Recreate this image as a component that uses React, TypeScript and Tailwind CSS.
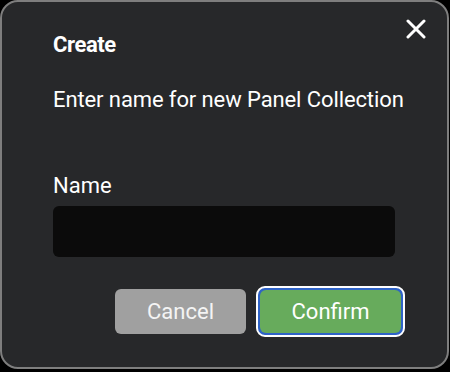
import { useState } from "react";

export default function App() {
  const [name, setName] = useState("");

  return (
    <div className="h-[372px] w-[450px] bg-black font-['Roboto',sans-serif]">
      <div className="relative flex h-[369px] w-[449px] flex-col rounded-[18px] border-2 border-[#7e7e7e] bg-[#27282a] pl-[51px] pr-[52px] pt-[29px] text-white">
        {/* Close */}
        <button className="absolute right-[20px] top-[16px] flex h-[22px] w-[22px] items-center justify-center">
          <svg width="20" height="20" viewBox="0 0 20 20">
            <path d="M2 2 L18 18 M18 2 L2 18" stroke="#fff" strokeWidth="3" strokeLinecap="round" />
          </svg>
        </button>

        <h3 className="text-[22px] font-bold leading-[28px] tracking-[-0.4px]">Create</h3>
        <p className="mt-[27px] whitespace-nowrap text-[22px] leading-[28px] tracking-[-0.1px]">
          Enter name for new Panel Collection
        </p>

        <label className="mt-[58px] text-[22px] leading-[28px]">Name</label>
        <input
          value={name}
          onChange={(e) => setName(e.target.value)}
          className="mt-[6px] h-[51px] w-[342px] rounded-[6px] bg-[#0b0b0b] px-3 text-[18px] text-white outline-none"
        />

        <div className="-mr-[10px] mt-[29px] flex items-center justify-end gap-[10px]">
          <button className="h-[45px] w-[131px] rounded-[6px] bg-[#a0a0a0] text-[22px] text-[#f4f4f4]">
            Cancel
          </button>
          <button className="h-[51px] w-[149px] rounded-[9px] border-2 border-white bg-[#2f63c7] p-[2px]">
            <span className="flex h-full w-full items-center justify-center rounded-[6px] bg-[#67ab5c] text-[22px] text-white">
              Confirm
            </span>
          </button>
        </div>
      </div>
    </div>
  );
}
